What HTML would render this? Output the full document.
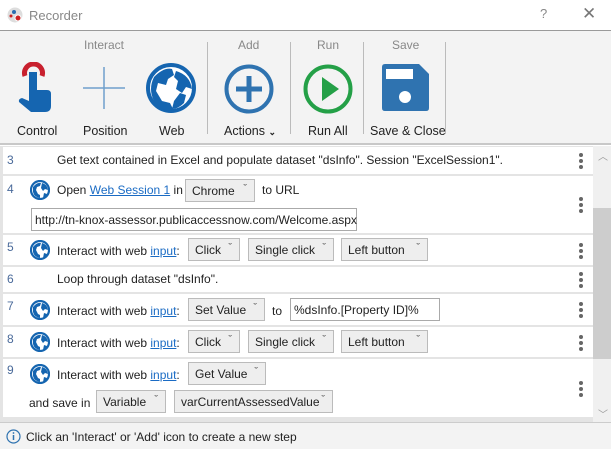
<!DOCTYPE html>
<html><head><style>
*{box-sizing:border-box;margin:0;padding:0}
body{width:611px;height:449px;overflow:hidden;background:#fff;font-family:"Liberation Sans",sans-serif;font-size:12px;color:#222;position:relative}
.a{position:absolute}
.tb{left:0;top:0;width:611px;height:30px;background:#fff}
.tool{left:0;top:30px;width:611px;height:115px;background:#f3f3f3;border-top:1px solid #9a9a9a;border-bottom:2px solid #c8c8c8}
.grp{color:#888;font-size:12px}
.lbl{color:#222;font-size:12.5px;text-align:center}
.vs{width:1px;background:#bbb;top:42px;height:92px}
.list{left:0;top:146px;width:593px;height:276px;background:#e4e4e4}
.row{position:absolute;left:3px;width:590px;background:#fff}
.num{position:absolute;left:4px;color:#4a6a9a;font-size:12px}
.t{position:absolute;white-space:nowrap}
.dd{position:absolute;height:23px;background:#eee;border:1px solid #bbb;padding:4px 0 0 6px;white-space:nowrap;overflow:hidden}
.dd:after{content:"ˇ";position:absolute;right:7px;top:3px;font-size:11px;color:#555}
.in{position:absolute;height:23px;background:#fff;border:1px solid #aaa;padding:4px 0 0 3px;white-space:nowrap}
.lnk{color:#1a6bc4;text-decoration:underline}
.dots{position:absolute;right:10px;width:4px}
.dots i{display:block;width:4px;height:4px;border-radius:2px;background:#666;margin-bottom:2px}
.sb{left:593px;top:146px;width:18px;height:276px;background:#f0f0f0}
.status{left:0;top:422px;width:611px;height:27px;background:#f3f3f3;border-top:1px solid #ccc}
.g{position:absolute;left:27px}
</style></head><body>
<div class="a tb">
<svg class="a" style="left:7px;top:7px" width="16" height="16"><circle cx="8" cy="8" r="7.5" fill="#ddd"/><circle cx="7" cy="5" r="2" fill="#2a6db0"/><circle cx="4" cy="9" r="1.5" fill="#c22"/><circle cx="11" cy="11" r="3" fill="#c22" stroke="#fff"/></svg>
<div class="a" style="left:29px;top:8px;color:#888;font-size:13px">Recorder</div>
<div class="a" style="left:540px;top:6px;color:#888;font-size:13px">?</div>
<div class="a" style="left:582px;top:4px;color:#777;font-size:17px">✕</div>
</div>
<div class="a tool"></div>
<div class="a grp" style="left:84px;top:38px">Interact</div>
<div class="a grp" style="left:238px;top:38px">Add</div>
<div class="a grp" style="left:317px;top:38px">Run</div>
<div class="a grp" style="left:392px;top:38px">Save</div>
<div class="a vs" style="left:207px"></div>
<div class="a vs" style="left:290px"></div>
<div class="a vs" style="left:363px"></div>
<div class="a vs" style="left:445px"></div>
<svg class="a" style="left:18px;top:62px" width="38" height="52"><path d="M7 14 A9 9 0 1 1 24 14" fill="none" stroke="#c8202e" stroke-width="5"/><path d="M11 10 h8 v18 h10 q4 0 4 4 v12 q0 6 -6 6 h-14 l-12 -10 q-1 -3 3 -4 l7 3 z" fill="#1565b0"/></svg>
<div class="a lbl" style="left:17px;top:124px">Control</div>
<svg class="a" style="left:83px;top:67px" width="42" height="42"><path d="M21 0v42M0 21h42" stroke="#6fa0cc" stroke-width="1.5"/></svg>
<div class="a lbl" style="left:83px;top:124px">Position</div>
<svg class="a" style="left:146px;top:63px" width="50" height="50" viewBox="0 0 50 50"><circle cx="25" cy="25" r="23" fill="#fff" stroke="#1565b0" stroke-width="4"/><path d="M8 14 q10 -10 18 -8 l2 6 -6 4 -2 6 -8 -2 -2 8 6 10 8 2 4 8 q-14 0 -20 -10 q-6 -12 0 -24z M30 8 q14 4 16 18 l-6 -2 -4 6 -6 -4 2 -8 -4 -4z M34 30 l6 2 -2 8 q-6 6 -12 6 l2 -8z" fill="#1565b0"/></svg>
<div class="a lbl" style="left:159px;top:124px">Web</div>
<svg class="a" style="left:223px;top:63px" width="52" height="52"><circle cx="26" cy="26" r="22.5" fill="none" stroke="#2f73b0" stroke-width="4"/><path d="M26 13v26M13 26h26" stroke="#2f73b0" stroke-width="5"/></svg>
<div class="a lbl" style="left:224px;top:124px">Actions <b style="font-size:9px">⌄</b></div>
<svg class="a" style="left:302px;top:63px" width="52" height="52"><circle cx="26" cy="26" r="22.5" fill="none" stroke="#24a047" stroke-width="4"/><path d="M20 14 L37 26 L20 38z" fill="#24a047"/></svg>
<div class="a lbl" style="left:308px;top:124px">Run All</div>
<svg class="a" style="left:380px;top:63px" width="50" height="50"><path d="M2 4 q0-3 3-3 h34 l10 10 v34 q0 3 -3 3 h-41 q-3 0 -3-3z" fill="#2f73b0"/><rect x="6" y="6" width="27" height="10" fill="#fff"/><circle cx="25" cy="34" r="6" fill="#fff"/></svg>
<div class="a lbl" style="left:370px;top:124px">Save &amp; Close</div>

<svg width="0" height="0" style="position:absolute"><defs><g id="gl"><circle cx="10" cy="10" r="9" fill="#fff" stroke="#1565b0" stroke-width="2.2"/><path d="M3 7 q4-5 8-4 l-1 3-3 1 -1 3 2 4 2 1 v3 q-6-1-7-6z M12 3 q5 1 6 7 l-3-1 -2 2 -2-3z M14 13 l3 1 q-1 3 -4 4z" fill="#1565b0"/></g></defs></svg>

<div class="a list">
<div class="row" style="top:1px;height:27px"><span class="num" style="top:6px">3</span><span class="t" style="left:54px;top:6px">Get text contained in Excel and populate dataset "dsInfo". Session "ExcelSession1".</span><div class="dots" style="top:6px"><i></i><i></i><i></i></div></div>
<div class="row" style="top:30px;height:57px"><span class="num" style="top:6px">4</span>
<svg class="g" style="top:4px" width="20" height="20"><use href="#gl"/></svg>
<span class="t" style="left:54px;top:7px">Open <span class="lnk">Web Session 1</span> in</span>
<div class="dd" style="left:182px;top:3px;width:70px">Chrome</div>
<span class="t" style="left:259px;top:7px">to URL</span>
<div class="in" style="left:28px;top:32px;width:326px">http://tn-knox-assessor.publicaccessnow.com/Welcome.aspx</div>
<div class="dots" style="top:21px"><i></i><i></i><i></i></div></div>
<div class="row" style="top:89px;height:30px"><span class="num" style="top:5px">5</span>
<svg class="g" style="top:5px" width="20" height="20"><use href="#gl"/></svg>
<span class="t" style="left:54px;top:9px">Interact with web <span class="lnk">input</span>:</span>
<div class="dd" style="left:185px;top:3px;width:52px">Click</div>
<div class="dd" style="left:245px;top:3px;width:86px">Single click</div>
<div class="dd" style="left:338px;top:3px;width:87px">Left button</div>
<div class="dots" style="top:8px"><i></i><i></i><i></i></div></div>
<div class="row" style="top:121px;height:25px"><span class="num" style="top:5px">6</span><span class="t" style="left:54px;top:5px">Loop through dataset "dsInfo".</span><div class="dots" style="top:5px"><i></i><i></i><i></i></div></div>
<div class="row" style="top:148px;height:31px"><span class="num" style="top:5px">7</span>
<svg class="g" style="top:6px" width="20" height="20"><use href="#gl"/></svg>
<span class="t" style="left:54px;top:10px">Interact with web <span class="lnk">input</span>:</span>
<div class="dd" style="left:185px;top:4px;width:77px">Set Value</div>
<span class="t" style="left:269px;top:10px">to</span>
<div class="in" style="left:287px;top:4px;width:150px">%dsInfo.[Property ID]%</div>
<div class="dots" style="top:8px"><i></i><i></i><i></i></div></div>
<div class="row" style="top:181px;height:30px"><span class="num" style="top:5px">8</span>
<svg class="g" style="top:5px" width="20" height="20"><use href="#gl"/></svg>
<span class="t" style="left:54px;top:9px">Interact with web <span class="lnk">input</span>:</span>
<div class="dd" style="left:185px;top:3px;width:52px">Click</div>
<div class="dd" style="left:245px;top:3px;width:86px">Single click</div>
<div class="dd" style="left:338px;top:3px;width:87px">Left button</div>
<div class="dots" style="top:8px"><i></i><i></i><i></i></div></div>
<div class="row" style="top:213px;height:58px"><span class="num" style="top:4px">9</span>
<svg class="g" style="top:5px" width="20" height="20"><use href="#gl"/></svg>
<span class="t" style="left:54px;top:9px">Interact with web <span class="lnk">input</span>:</span>
<div class="dd" style="left:185px;top:3px;width:78px">Get Value</div>
<span class="t" style="left:26px;top:37px">and save in</span>
<div class="dd" style="left:93px;top:31px;width:70px">Variable</div>
<div class="dd" style="left:171px;top:31px;width:159px">varCurrentAssessedValue</div>
<div class="dots" style="top:22px"><i></i><i></i><i></i></div></div>
</div>
<div class="a sb"><div class="a" style="left:0;top:62px;width:18px;height:151px;background:#cdcdcd"></div>
<div class="a" style="left:5px;top:2px;color:#999;font-size:10px">︿</div><div class="a" style="left:5px;top:260px;color:#999;font-size:10px">﹀</div></div>
<div class="a status">
<svg class="a" style="left:6px;top:6px" width="15" height="15"><circle cx="7.5" cy="7.5" r="6.5" fill="none" stroke="#2f73b0" stroke-width="1.2"/><path d="M7.5 6v5" stroke="#2f73b0" stroke-width="1.5"/><circle cx="7.5" cy="4" r="0.9" fill="#2f73b0"/></svg>
<div class="a" style="left:26px;top:7px">Click an 'Interact' or 'Add' icon to create a new step</div>
</div>
</body></html>
